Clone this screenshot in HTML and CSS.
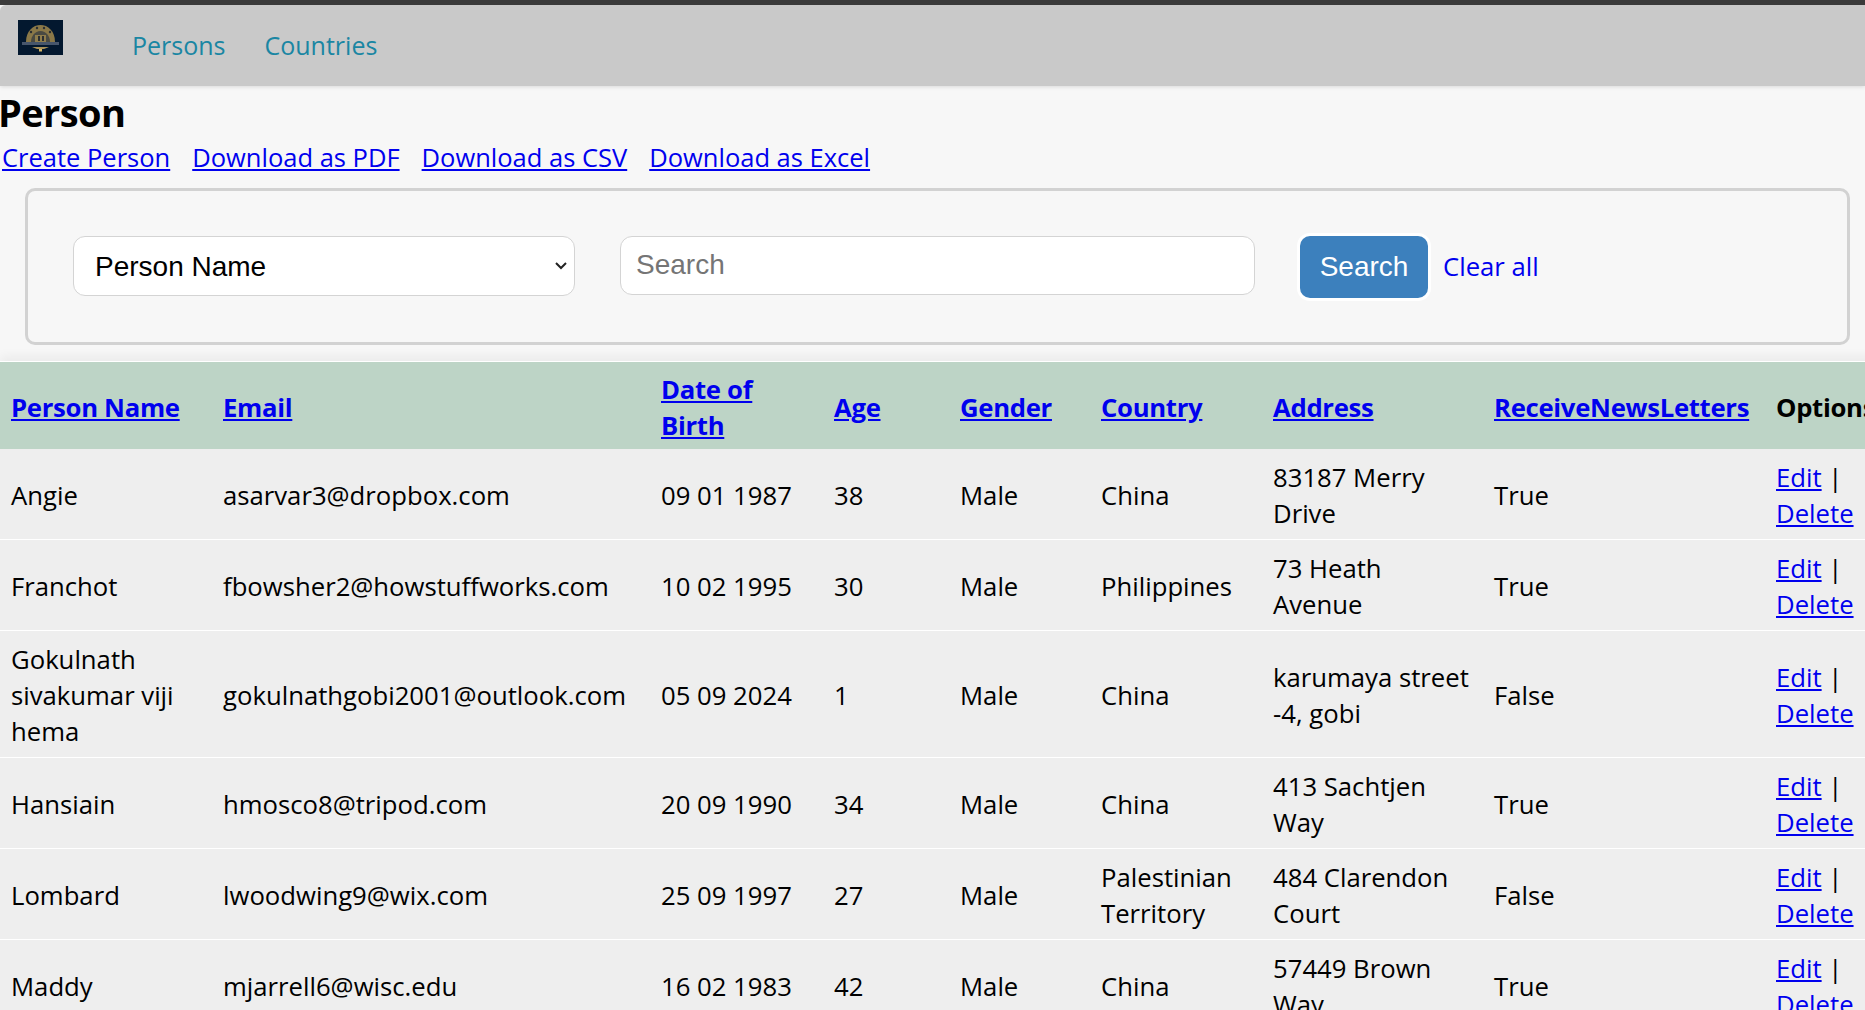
FILE: index.html
```html
<!DOCTYPE html>
<html lang="en">
<head>
  <meta charset="UTF-8" />
  <title>Person</title>
  <link rel="stylesheet" href="styles.css">
</head>
<body>
  <div class="nav">
    <a class="logo" href="#">
      <svg width="45" height="35" viewBox="0 0 45 35">
        <rect width="45" height="35" fill="#03182f"/>
        <path d="M8 22 C8 11 15 5 22.500 5 C30 5 37 11 37 22 Z" fill="#8a7848"/>
        <path d="M13 22 C13 16 17 11 22.500 11 C28 11 32 16 32 22 Z" fill="#4a4a42"/>
        <path d="M17 22 V15 H28 V22 Z" fill="#8f7d4c"/>
        <g fill="#2b2f33">
          <circle cx="13" cy="12" r="1.200"/>
          <circle cx="19" cy="8" r="1.200"/>
          <circle cx="26" cy="8" r="1.200"/>
          <circle cx="32" cy="12" r="1.200"/>
          <rect x="20" y="16" width="2" height="5"/>
          <rect x="24" y="16" width="2" height="5"/>
        </g>
        <rect x="4" y="22" width="37" height="3" fill="#47566c"/>
        <path d="M14 27 H31 L26 29 H19 Z" fill="#a8915a"/>
        <rect x="21" y="29" width="3" height="2.500" fill="#d8b765"/>
      </svg>
    </a>
    <a class="nav-link" href="#">Persons</a>
    <a class="nav-link" href="#">Countries</a>
  </div>

  <h1>Person</h1>
  <div class="actions">
    <a href="#">Create Person</a>
    <a href="#">Download as PDF</a>
    <a href="#">Download as CSV</a>
    <a href="#">Download as Excel</a>
  </div>

  <form class="search-box">
    <select class="field">
      <option>Person Name</option>
    </select>
    <input class="search-input" type="text" placeholder="Search" />
    <button class="btn-search" type="button">Search</button>
    <a class="clear" href="#">Clear all</a>
  </form>

  <table class="persons">
    <colgroup>
      <col class="c-name"><col class="c-email"><col class="c-dob"><col class="c-age"><col class="c-gender">
      <col class="c-country"><col class="c-address"><col class="c-news"><col class="c-opt">
    </colgroup>
    <thead>
      <tr>
        <th><a href="#">Person Name</a></th>
        <th><a href="#">Email</a></th>
        <th><a href="#">Date of Birth</a></th>
        <th><a href="#">Age</a></th>
        <th><a href="#">Gender</a></th>
        <th><a href="#">Country</a></th>
        <th><a href="#">Address</a></th>
        <th><a href="#">ReceiveNewsLetters</a></th>
        <th>Options</th>
      </tr>
    </thead>
    <tbody>
      <tr>
        <td>Angie</td><td>asarvar3@dropbox.com</td><td>09 01 1987</td><td>38</td><td>Male</td><td>China</td>
        <td>83187 Merry Drive</td><td>True</td><td class="opt"><a href="#">Edit</a> | <a href="#">Delete</a></td>
      </tr>
      <tr>
        <td>Franchot</td><td>fbowsher2@howstuffworks.com</td><td>10 02 1995</td><td>30</td><td>Male</td><td>Philippines</td>
        <td>73 Heath Avenue</td><td>True</td><td class="opt"><a href="#">Edit</a> | <a href="#">Delete</a></td>
      </tr>
      <tr>
        <td>Gokulnath sivakumar viji hema</td><td>gokulnathgobi2001@outlook.com</td><td>05 09 2024</td><td>1</td><td>Male</td><td>China</td>
        <td>karumaya street -4, gobi</td><td>False</td><td class="opt"><a href="#">Edit</a> | <a href="#">Delete</a></td>
      </tr>
      <tr>
        <td>Hansiain</td><td>hmosco8@tripod.com</td><td>20 09 1990</td><td>34</td><td>Male</td><td>China</td>
        <td>413 Sachtjen Way</td><td>True</td><td class="opt"><a href="#">Edit</a> | <a href="#">Delete</a></td>
      </tr>
      <tr>
        <td>Lombard</td><td>lwoodwing9@wix.com</td><td>25 09 1997</td><td>27</td><td>Male</td><td>Palestinian Territory</td>
        <td>484 Clarendon Court</td><td>False</td><td class="opt"><a href="#">Edit</a> | <a href="#">Delete</a></td>
      </tr>
      <tr>
        <td>Maddy</td><td>mjarrell6@wisc.edu</td><td>16 02 1983</td><td>42</td><td>Male</td><td>China</td>
        <td>57449 Brown Way</td><td>True</td><td class="opt"><a href="#">Edit</a> | <a href="#">Delete</a></td>
      </tr>
    </tbody>
  </table>
</body>
</html>
```

FILE: styles.css
```css
html, body {
  margin: 0;
  padding: 0;
  height: 100%;
  overflow: hidden;
}
body {
  background: #f7f7f7;
  border-top: 5px solid #3a3a3a;
  box-sizing: border-box;
  font-family: 'Open Sans', 'Noto Sans', sans-serif;
  font-size: 25.7px;
  line-height: 36px;
  color: #000;
}
a { color: #0000ee; }

.nav {
  display: flex;
  align-items: flex-start;
  height: 81px;
  background: #c9c9c9;
  box-shadow: 0 1px 4px rgba(0,0,0,.12);
  border-top-left-radius: 6px;
}
.logo {
  display: block;
  width: 45px;
  height: 35px;
  margin: 15px 69px 0 18px;
}
.nav-link {
  margin: 22px 39px 0 0;
  color: #1a86a3;
  font-size: 25px;
  text-decoration: none;
}

h1 {
  margin: 5px 0 0 -2px;
  font-size: 38px;
  line-height: 42px;
  font-weight: 700;
  letter-spacing: -.6px;
}
.actions {
  display: flex;
  gap: 22px;
  margin: 6px 0 0 2px;
  font-size: 25.5px;
}

.search-box {
  display: flex;
  align-items: center;
  box-sizing: border-box;
  height: 157px;
  margin: 13px 15px 0 25px;
  padding: 0 0 0 45px;
  border: 3px solid #d2d2d2;
  border-radius: 10px;
}
.field {
  display: block;
  width: 502px;
  height: 60px;
  margin: 0 45px 2px 0;
  padding: 2px 0 0 21px;
  appearance: none;
  background: #fff url("data:image/svg+xml,%3Csvg xmlns='http://www.w3.org/2000/svg' width='14' height='10'%3E%3Cpath d='M2 2l5 5 5-5' fill='none' stroke='%23222' stroke-width='2'/%3E%3C/svg%3E") no-repeat right 6px center;
  border: 1px solid #d4d4d4;
  border-radius: 12px;
  font-family: 'Liberation Sans', Arial, sans-serif;
  font-size: 28px;
  color: #000;
}
.search-input {
  box-sizing: border-box;
  width: 635px;
  height: 59px;
  margin: 0 45px 3px 0;
  padding: 0 15px;
  background: #fff;
  border: 1px solid #d4d4d4;
  border-radius: 12px;
  font-family: 'Liberation Sans', Arial, sans-serif;
  font-size: 28px;
}
.search-input::placeholder { color: #757575; }
.btn-search {
  width: 128px;
  height: 62px;
  background: #3c80bd;
  border: none;
  border-radius: 10px;
  box-shadow: 0 0 0 3px #fff;
  color: #fff;
  font-family: 'Liberation Sans', Arial, sans-serif;
  font-size: 28px;
}
.clear {
  margin-left: 15px;
  text-decoration: none;
}

.persons {
  table-layout: fixed;
  width: 1970px;
  margin-top: 17px;
  border-collapse: collapse;
  box-shadow: 0 -1px 0 #fff, 0 -6px 10px rgba(0,0,0,.05);
  background: #eee;
}
.c-name { width: 212px; }
.c-email { width: 438px; }
.c-dob { width: 173px; }
.c-age { width: 126px; }
.c-gender { width: 141px; }
.c-country { width: 172px; }
.c-address { width: 221px; }
.c-news { width: 282px; }
.c-opt { width: 205px; }

.persons th {
  padding: 10px 11px 5px;
  background: #bdd4c6;
  text-align: left;
  font-weight: 700;
  letter-spacing: -.3px;
}
.persons td {
  padding: 11px 12px 7px 11px;
  border-bottom: 1px solid #fff;
}
.persons td.opt { padding-right: 90px; }
```
